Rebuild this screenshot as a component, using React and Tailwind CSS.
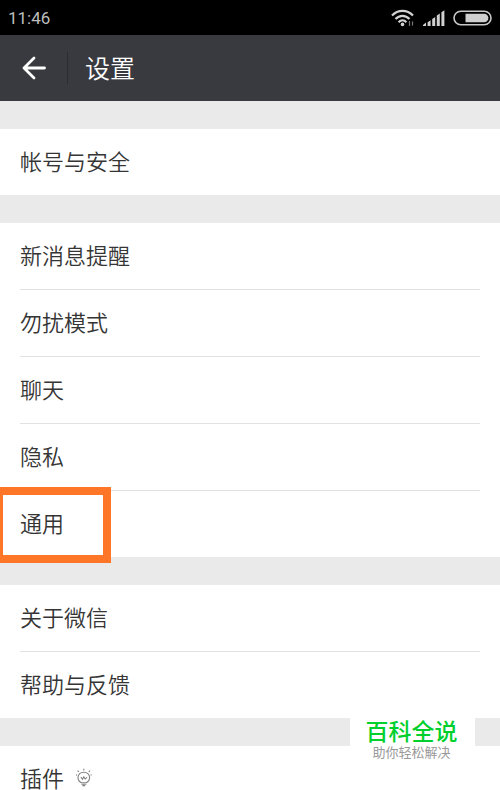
const groups = [
  ['帐号与安全'],
  ['新消息提醒', '勿扰模式', '聊天', '隐私', '通用'],
  ['关于微信', '帮助与反馈'],
  ['插件'],
]

function StatusBar() {
  return (
    <div className="flex h-[35px] shrink-0 items-center justify-between bg-black px-2 text-[#bdbdbd]">
      <span className="font-['Roboto',sans-serif] text-[17px] leading-5">11:46</span>
      <div className="flex items-center gap-2">
        {/* Wifi */}
        <svg width="24" height="18" viewBox="0 0 24 18" fill="none" stroke="#d4d4d4" strokeWidth="2.2">
          <path d="M1 6.6C7 0.4 16 0.4 22 6.6" />
          <path d="M4.5 10C8.6 5.7 14.4 5.7 18.5 10" />
          <path d="M7.6 13.2C10 10.6 13 10.6 15.4 13.2" />
          <circle cx="11.5" cy="15.4" r="1.8" fill="#d4d4d4" stroke="none" />
          <path d="M18.5 12v5M21.5 12.5v4" stroke="#777" strokeWidth="1.2" />
        </svg>
        {/* Señal */}
        <svg width="22" height="16" viewBox="0 0 22 16" fill="#d0d0d0">
          <path d="M0 15l3-2.4V16H0z" />
          <path d="M4.6 12.2l3-2V16h-3z" />
          <path d="M9.2 9l3-2v9h-3z" />
          <path d="M13.8 5.6l3-2V16h-3z" />
          <path d="M18.4 2.2l3-2V16h-3z" />
        </svg>
        {/* Batería */}
        <svg width="39" height="16" viewBox="0 0 39 16" fill="none">
          <rect x="1" y="1.2" width="37" height="13.6" rx="6.8" stroke="#c8c8c8" strokeWidth="1.6" />
          <path d="M12.5 3.7h18.6a4.3 4.3 0 0 1 0 8.6H12.5z" fill="#d0d0d0" />
        </svg>
      </div>
    </div>
  )
}

function Header() {
  return (
    <header className="flex h-[66px] shrink-0 items-center bg-[#393a3f] text-white">
      <button aria-label="返回" className="flex h-full w-[67px] items-center justify-center">
        <svg
          width="24"
          height="24"
          viewBox="0 0 24 24"
          fill="none"
          stroke="currentColor"
          strokeWidth="2.8"
          strokeLinecap="round"
          strokeLinejoin="round"
        >
          <path d="M12 2L2 12l10 10M2 12h20.5" />
        </svg>
      </button>
      <div className="h-8 w-px bg-[#2c2d31]" />
      <h1 className="pb-0.5 pl-[17px] text-[25px] font-[350] leading-8">设置</h1>
    </header>
  )
}

function BulbIcon() {
  return (
    <svg width="16" height="19" viewBox="0 0 16 19" fill="none" stroke="#808080" strokeWidth="1.1">
      <path d="M5.4 14.8C3.3 13.8 2 12 2 9.6 2 6.4 4.6 4.2 7.8 4.2s5.8 2.2 5.8 5.4c0 2.4-1.3 4.2-3.4 5.2z" />
      <path d="M4.8 9.2l1.8 2 1.2-2.4 1.4 2.2 1.8-1.6" />
      <path d="M5.4 16.2h4.8M6.4 17.6h2.8" />
      <path d="M7.8.8v1.6M1.6 2.6l1.2 1.2M14 2.6l-1.2 1.2M0 6.8l1 .4M15.6 6.8l-1 .4" />
    </svg>
  )
}

function Row({ label }) {
  return (
    <li className="relative">
      <button className="flex h-[66px] w-full items-center gap-3 pb-1 text-left text-[22px] font-[350] leading-6">
        {label}
        {label === '插件' && <BulbIcon />}
      </button>
      {label === '通用' && (
        <div className="pointer-events-none absolute -bottom-1.5 -left-[25px] -top-1 w-[116px] border-8 border-[#ff7628]" />
      )}
    </li>
  )
}

export default function App() {
  return (
    <div className="relative flex h-screen flex-col overflow-hidden bg-[#eaeaea] font-['Noto_Sans_CJK_SC',sans-serif] text-[#353535]">
      <StatusBar />
      <Header />
      <main className="flex flex-1 flex-col gap-7 overflow-y-auto pt-7 [scrollbar-width:none]">
        {groups.map((items) => (
          <section key={items[0]} className="bg-white px-5">
            <ul className="divide-y divide-[#e2e2e2]">
              {items.map((label) => (
                <Row key={label} label={label} />
              ))}
            </ul>
          </section>
        ))}
      </main>

      {/* Marca de agua */}
      <div className="absolute bottom-6 right-[25px] w-[125px] bg-white pb-1 pr-0.5 text-center">
        <div className="text-[23px] font-medium leading-6 text-[#00d02d]">百科全说</div>
        <div className="text-[13px] leading-5 text-[#999]">助你轻松解决</div>
      </div>
    </div>
  )
}
